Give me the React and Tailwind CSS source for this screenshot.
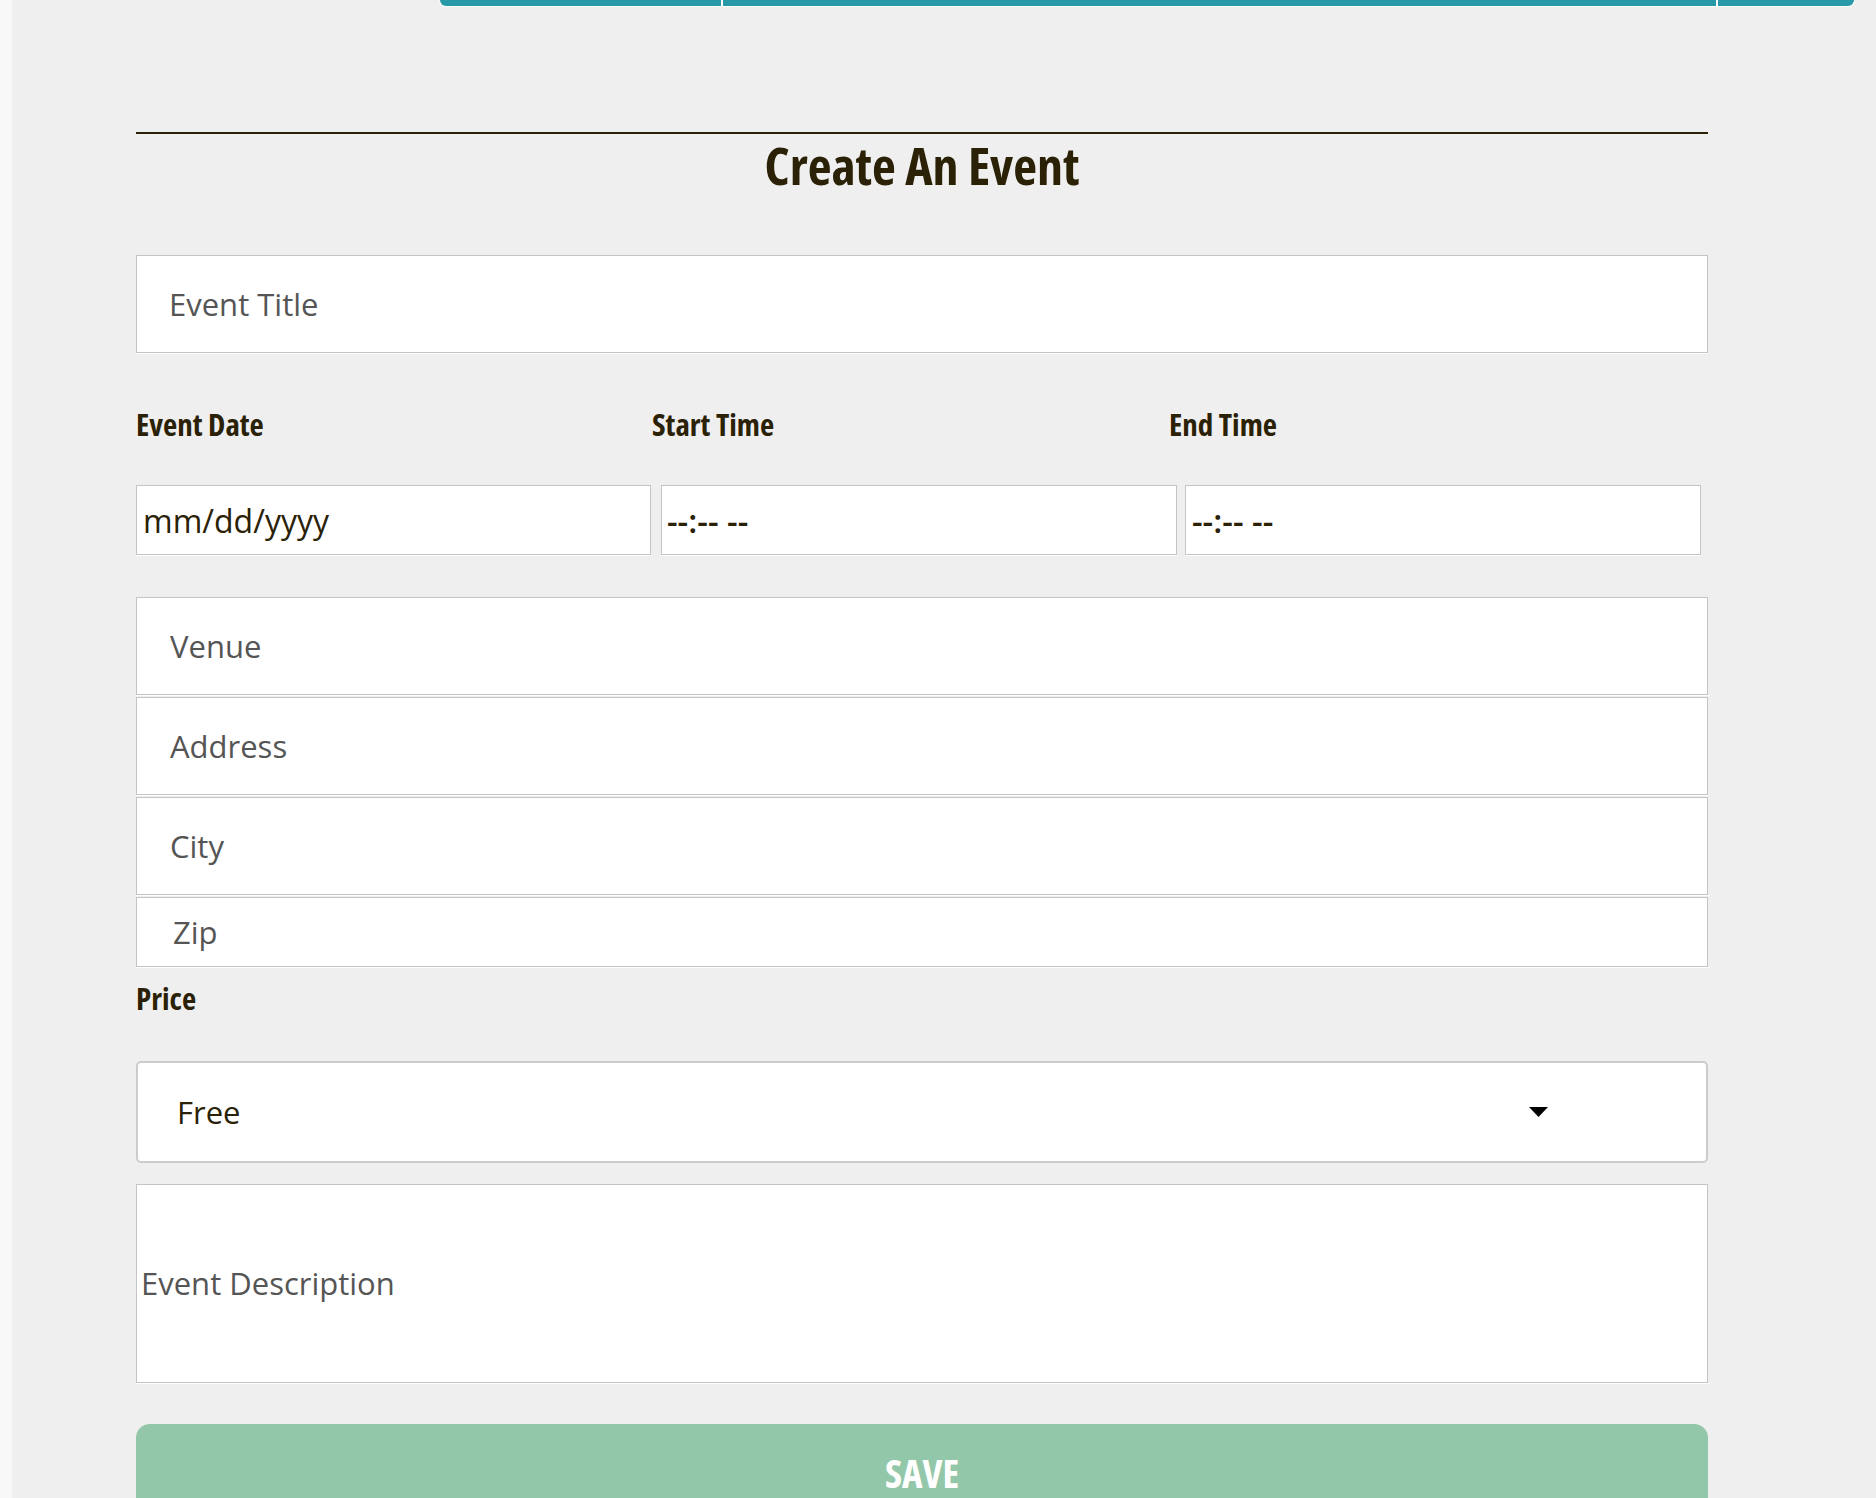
export default function App() {
  const label = "font-['Open_Sans',sans-serif] font-bold font-stretch-condensed text-[31px] leading-none text-[#2a2106]"
  const box = "block w-full bg-white border border-[#c4c4c4] shadow-[0_1px_0_#fff] font-['Open_Sans',sans-serif] outline-none"
  const gray = "text-[31px] text-[#555] placeholder:text-[#555]"
  const dark = "text-[#2a2106] placeholder:text-[#2a2106]"

  return (
    <div className="min-h-screen flex bg-[#efefef] overflow-hidden">
      <div className="w-[12px] shrink-0 bg-[#f8f8f8]" />

      <div className="flex-1">
        <div className="ml-[427px] w-[1416px] h-[7px] flex rounded-b-[10px] border border-t-0 border-white overflow-hidden bg-[#2899a7]">
          <div className="w-[283px] border-r-2 border-white" />
          <div className="w-[995px] border-r-2 border-white" />
          <div className="flex-1" />
        </div>

        <form className="ml-[124px] w-[1572px]" onSubmit={e => e.preventDefault()}>
          <div className="mt-[125px] h-[2px] bg-[#2a2106]" />
          <h1 className="mt-[5px] h-[52px] text-center font-['Open_Sans',sans-serif] font-bold font-stretch-condensed text-[52px] leading-none text-[#2a2106]">
            Create An Event
          </h1>

          <input type="text" placeholder="Event Title" className={`${box} ${gray} mt-[64px] h-[98px] pl-[32px]`} />

          <div className="mt-[56px] h-[30px] flex">
            <div className={`${label} w-[516px]`}>Event Date</div>
            <div className={`${label} w-[517px]`}>Start Time</div>
            <div className={`${label} flex-1`}>End Time</div>
          </div>

          <div className="mt-[46px] h-[70px] flex">
            <input type="text" placeholder="mm/dd/yyyy"
              className={`${box} ${dark} !w-[515px] h-full pl-[6px] text-[32px]`} />
            <input type="text" placeholder="--:-- --"
              className={`${box} ${dark} !w-[516px] ml-[10px] h-full pl-[5px] text-[33px] font-semibold`} />
            <input type="text" placeholder="--:-- --"
              className={`${box} ${dark} !w-[516px] ml-[8px] h-full pl-[6px] text-[33px] font-semibold`} />
          </div>

          <input type="text" placeholder="Venue" className={`${box} ${gray} mt-[42px] h-[98px] pl-[33px]`} />
          <input type="text" placeholder="Address" className={`${box} ${gray} mt-[2px] h-[98px] pl-[33px]`} />
          <input type="text" placeholder="City" className={`${box} ${gray} mt-[2px] h-[98px] pl-[33px]`} />
          <input type="text" placeholder="Zip" className={`${box} ${gray} mt-[2px] h-[70px] pl-[36px]`} />

          <div className={`${label} mt-[16px] h-[30px]`}>Price</div>

          <div className="mt-[48px] h-[102px] flex items-center bg-white border-2 border-[#cccccc] rounded-[5px] pl-[39px] font-['Open_Sans',sans-serif] text-[31px] text-[#2a2106]">
            <span>Free</span>
            <svg width="19" height="10" viewBox="0 0 19 10" className="ml-auto mr-[158px]">
              <path d="M0 0 H19 L9.5 10 Z" fill="#000" />
            </svg>
          </div>

          <textarea placeholder="Event Description"
            className={`${box} ${gray} mt-[21px] h-[199px] pt-[75px] pl-[4px] resize-none leading-normal`} />

          <button type="submit"
            className="mt-[41px] w-full h-[100px] rounded-[14px] bg-[#93c7a9] pt-[29px] flex justify-center items-start font-['Open_Sans',sans-serif] font-bold font-stretch-condensed text-[39px] leading-none text-white">
            SAVE
          </button>
        </form>
      </div>
    </div>
  )
}
